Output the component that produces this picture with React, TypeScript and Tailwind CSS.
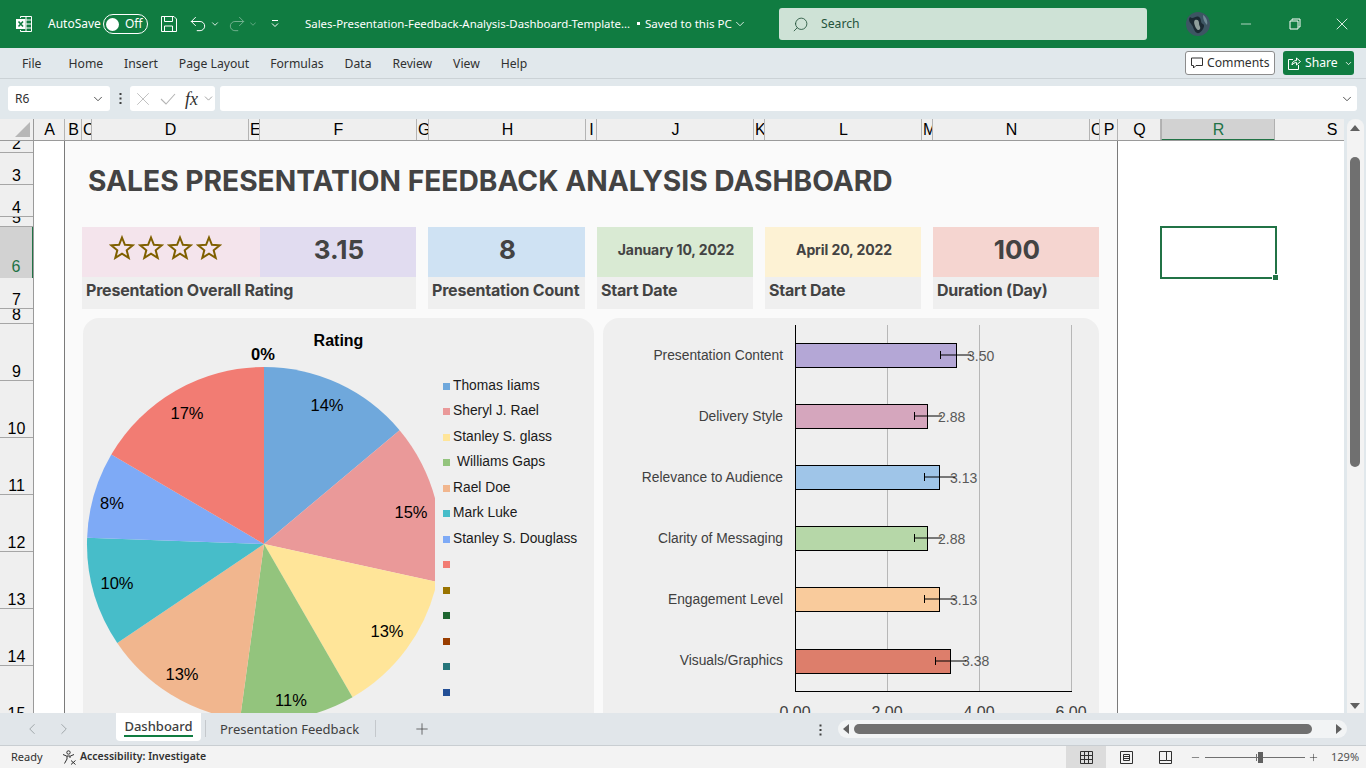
import { ChevronDown, ChevronLeft, ChevronRight, Minus, Plus, Redo2, Search, Undo2, X } from 'lucide-react';

const columns: [string, number][] = [
  ['A', 31], ['B', 17], ['C', 10], ['D', 157], ['E', 11], ['F', 157], ['G', 12], ['H', 157], ['I', 11], ['J', 157],
  ['K', 11], ['L', 157], ['M', 11], ['N', 157], ['O', 10], ['P', 18], ['Q', 43], ['R', 114], ['S', 114],
];

const rows: [string, number][] = [
  ['2', 12], ['3', 32], ['4', 32], ['5', 10], ['6', 51], ['7', 31], ['8', 15], ['9', 57], ['10', 57], ['11', 57],
  ['12', 57], ['13', 57], ['14', 57], ['15', 57],
];

const ribbon = ['Home', 'Insert', 'Page Layout', 'Formulas', 'Data', 'Review', 'View', 'Help'];

const slices = [
  { from: 0, to: 50, color: '#6fa8dc', label: '14%', x: 327, y: 405 },
  { from: 50, to: 102.4, color: '#ea9999', label: '15%', x: 411, y: 512 },
  { from: 102.4, to: 150, color: '#ffe599', label: '13%', x: 387, y: 631 },
  { from: 150, to: 187.8, color: '#93c47d', label: '11%', x: 291, y: 700 },
  { from: 187.8, to: 236, color: '#f1b68e', label: '13%', x: 182, y: 674 },
  { from: 236, to: 272, color: '#47bdc9', label: '10%', x: 117, y: 583 },
  { from: 272, to: 300.4, color: '#7eaaf6', label: '8%', x: 112, y: 503 },
  { from: 300.4, to: 360, color: '#f27c73', label: '17%', x: 187, y: 413 },
];

const legend = [
  { color: '#6fa8dc', name: 'Thomas Iiams' },
  { color: '#ea9999', name: 'Sheryl J. Rael' },
  { color: '#ffe599', name: 'Stanley S. glass' },
  { color: '#93c47d', name: 'Williams Gaps', indent: true },
  { color: '#f1b68e', name: 'Rael Doe' },
  { color: '#47bdc9', name: 'Mark Luke' },
  { color: '#7eaaf6', name: 'Stanley S. Douglass' },
  { color: '#f27c73', name: '' },
  { color: '#997300', name: '' },
  { color: '#1e6630', name: '' },
  { color: '#993d00', name: '' },
  { color: '#26757a', name: '' },
  { color: '#234f96', name: '' },
];

const bars = [
  { name: 'Presentation Content', top: 343.5, end: 956.5, color: '#b4a7d6', low: 940.5, high: 971, value: '3.50', vx: 967 },
  { name: 'Delivery Style', top: 404.5, end: 927.5, color: '#d5a6bd', low: 914.5, high: 942, value: '2.88', vx: 938 },
  { name: 'Relevance to Audience', top: 465.5, end: 939.5, color: '#9fc5e8', low: 924.5, high: 955, value: '3.13', vx: 950 },
  { name: 'Clarity of Messaging', top: 526.5, end: 927.5, color: '#b6d7a8', low: 914.5, high: 942, value: '2.88', vx: 938 },
  { name: 'Engagement Level', top: 587.5, end: 939.5, color: '#f9cb9c', low: 924.5, high: 955, value: '3.13', vx: 950 },
  { name: 'Visuals/Graphics', top: 649.5, end: 950.5, color: '#dd7e6b', low: 935.5, high: 966, value: '3.38', vx: 962 },
];

const slicePath = (from: number, to: number) => {
  const cx = 264;
  const cy = 544;
  const r = 177;
  const a = (from * Math.PI) / 180;
  const b = (to * Math.PI) / 180;
  return `M${cx} ${cy}L${cx + r * Math.sin(a)} ${cy - r * Math.cos(a)}A${r} ${r} 0 ${to - from > 180 ? 1 : 0} 1 ${cx + r * Math.sin(b)} ${cy - r * Math.cos(b)}Z`;
};

const TitleBar = () => (
  <div className="flex h-12 shrink-0 items-center bg-[#107c41] text-white">
    <svg className="ml-4 shrink-0" width="16" height="16" viewBox="0 0 16 16" fill="none">
      <path d="M4.5 2V.5h11v15h-11V14M10 .5v15M10 4h5.5M10 8h5.5M10 12h5.5" stroke="#fff" />
      <rect x="0" y="3" width="9.5" height="10" fill="#fff" />
      <path d="M2.5 5.5l4.5 5M7 5.5l-4.5 5" stroke="#107c41" strokeWidth="1.6" />
    </svg>
    <span className="ml-4 w-[48px] text-[12px]">AutoSave</span>
    <div className="ml-[7px] flex h-5 w-[45px] items-center rounded-full border border-white pl-[2px]">
      <span className="h-[13px] w-[13px] rounded-full bg-white" />
      <span className="ml-[6px] text-[12px]">Off</span>
    </div>
    <svg className="ml-[13px] shrink-0" width="16" height="16" viewBox="0 0 16 16" fill="none" stroke="#fff">
      <path d="M.5.5h12.5l2.5 2.5v12.5H.5zM3.5.5v5h8v-5M3.5 15.5v-5.5h8v5.500" />
    </svg>
    <Undo2 className="ml-[11px]" size={20} strokeWidth={1.2} />
    <ChevronDown className="ml-[2px]" size={10} strokeWidth={2} />
    <Redo2 className="ml-[7px] opacity-40" size={20} strokeWidth={1.2} />
    <ChevronDown className="ml-[1px] opacity-40" size={10} strokeWidth={2} />
    <svg className="ml-[12px] shrink-0" width="10" height="10" viewBox="0 0 10 10" fill="none" stroke="#fff">
      <path d="M2 1.500h6M2 4.500l3 3 3-3" />
    </svg>
    <div className="ml-[25px] flex w-[427px] shrink-0 items-center whitespace-nowrap text-[11.600px]">
      <span className="w-[327px] shrink-0 text-[11.400px]">Sales-Presentation-Feedback-Analysis-Dashboard-Template...</span>
      <span className="ml-[5px] h-[3px] w-[3px] shrink-0 bg-white" />
      <span className="ml-[5px]">Saved to this PC</span>
    </div>
    <ChevronDown className="ml-[1px]" size={14} strokeWidth={1.4} />
    <div className="ml-[32px] flex h-8 w-[368px] shrink-0 items-center rounded-[3px] bg-[#cee2d6] text-[#24533b]">
      <Search className="ml-[13px] -scale-x-100" size={17} strokeWidth={1.2} />
      <span className="ml-3 text-[12.200px]">Search</span>
    </div>
    <svg className="ml-[39px] shrink-0" width="24" height="24" viewBox="0 0 24 24">
      <circle cx="12" cy="12" r="12" fill="#3d5563" />
      <path d="M4 5c3 3 6-2 9 0s1 6 4 7-1 8-4 9-5-3-6-6-6-6-3-10z" fill="#1b2a33" />
      <path d="M9 8c2-1 4 0 4 3s2 4 1 6-3 1-4-1-3-6-1-8z" fill="#8f9f9c" />
      <path d="M17 3c3 2 5 6 4 10-2-2-4-5-4-10z" fill="#6f8a96" />
    </svg>
    <Minus className="ml-[28px]" size={16} strokeWidth={1} />
    <svg className="ml-[35px] shrink-0" width="12" height="12" viewBox="0 0 12 12" fill="none" stroke="#fff">
      <path d="M3 2.500V1h8v8H9.500M1 3h8v8H1z" />
    </svg>
    <X className="ml-[31px]" size={20} strokeWidth={1} />
  </div>
);

const RibbonTabs = () => (
  <div className="flex h-[31px] shrink-0 items-center border-b border-[#cbd2d6] bg-[#e1e8ec] text-[12.200px] text-[#303030]">
    <span className="ml-[22px] mr-[27px] mt-[2px]">File</span>
    <div className="mt-[2px] flex gap-[20.900px]">
      {ribbon.map((tab) => (
        <span key={tab}>{tab}</span>
      ))}
    </div>
    <div className="ml-auto flex h-6 w-[90px] items-center rounded-[3px] border border-[#8c8c8c] bg-white pl-[5px]">
      <svg width="12" height="12" viewBox="0 0 12 12" fill="none" stroke="#303030">
        <path d="M.5 1h11v7.500H5l-2.500 2.500V8.500h-2z" />
      </svg>
      <span className="ml-[4px]">Comments</span>
    </div>
    <div className="ml-2 mr-3 flex h-6 w-[71px] items-center rounded-[3px] bg-[#107c41] pl-[5px] text-white">
      <svg width="13" height="13" viewBox="0 0 13 13" fill="none" stroke="#fff">
        <path d="M5 2.500H.5v10h10V8M4 8c0-3 2-4.500 4.500-4.500V1L12.500 4.500 8.500 8V5.500C6.500 5.500 5 6.500 4 8z" />
      </svg>
      <span className="ml-[4px]">Share</span>
      <ChevronDown className="ml-[6px]" size={9} strokeWidth={2.2} />
    </div>
  </div>
);

const FormulaBar = () => (
  <div className="flex h-10 shrink-0 items-center bg-[#e1e8ec] pb-px text-[12px] text-[#303030]">
    <div className="ml-2 flex h-[25px] w-[102px] items-center justify-between rounded-[3px] bg-white pl-[7px] pr-[5px]">
      <span>R6</span>
      <ChevronDown size={14} strokeWidth={1.4} />
    </div>
    <svg className="ml-[9px] shrink-0" width="3" height="13" viewBox="0 0 3 13" fill="#404040">
      <rect x="0.500" y="1" width="2" height="2" />
      <rect x="0.500" y="5.500" width="2" height="2" />
      <rect x="0.500" y="10" width="2" height="2" />
    </svg>
    <div className="ml-[8px] flex h-[25px] w-[85px] items-center rounded-[3px] bg-white">
      <X className="ml-[2px] text-[#b4b4b4]" size={22} strokeWidth={0.9} />
      <svg className="ml-[6px] shrink-0" width="16" height="14" viewBox="0 0 16 14" fill="none" stroke="#b4b4b4" strokeWidth="1.100">
        <path d="M1 7l5 5 9-10" />
      </svg>
      <span className="ml-[9px] w-[14px] font-['Liberation_Serif',serif] text-[18px] italic leading-none text-[#303030]">fx</span>
      <ChevronDown className="ml-[3px] text-[#808080]" size={13} strokeWidth={1.3} />
    </div>
    <div className="ml-[5px] flex h-[25px] w-[1137px] items-center justify-end rounded-[3px] bg-white pr-[3px]">
      <ChevronDown size={14} strokeWidth={1.4} />
    </div>
  </div>
);

const SheetHeader = () => (
  <div className="flex h-[22px] shrink-0 overflow-hidden border-b border-[#9a9a9a] bg-[#efefef] font-['Liberation_Sans',Arial,sans-serif] text-[16px] text-black">
    <div className="flex w-[34px] shrink-0 items-end justify-end border-r border-[#9a9a9a] pb-[3px] pr-[3px]">
      <svg width="15" height="15" viewBox="0 0 15 15" fill="#b7b7b7">
        <path d="M15 0v15H0z" />
      </svg>
    </div>
    {columns.map(([name, width]) =>
      name === 'R' ? (
        <div key={name} className="h-[22px] shrink-0 border-x border-b-2 border-[#b0b0b0] border-b-[#217346] bg-[#d2d2d2] pl-px text-center leading-[21px] text-[#217346]" style={{ width }}>
          {name}
        </div>
      ) : (
        <div key={name} className="shrink-0 overflow-hidden whitespace-nowrap border-r border-[#b4b4b4] pl-px text-center leading-[21px]" style={{ width }}>
          {name}
        </div>
      ),
    )}
  </div>
);

const RowHeader = () => (
  <div className="w-[34px] shrink-0 overflow-hidden border-r border-[#9a9a9a] bg-[#efefef] font-['Liberation_Sans',Arial,sans-serif] text-[16px] text-black">
    {rows.map(([name, height]) =>
      name === '6' ? (
        <div key={name} className="-mr-px flex items-end justify-center overflow-hidden border-r-2 border-r-[#217346] bg-[#d2d2d2] pb-[2px] leading-[18px] text-[#217346]" style={{ height }}>
          {name}
        </div>
      ) : (
        <div key={name} className="flex items-end justify-center overflow-hidden border-b border-[#a6a6a6] leading-[16px]" style={{ height }}>
          {name}
        </div>
      ),
    )}
  </div>
);

const Star = () => (
  <svg width="26" height="25" viewBox="0 0 26 25" fill="none" stroke="#7f6000" strokeWidth="2">
    <path d="M13 2.500l2.900 7.300 7.800.5-6 5 2 7.600-6.700-4.200-6.700 4.200 2-7.600-6-5 7.800-.5z" />
  </svg>
);

const KpiRow = () => {
  const labelCls = 'flex h-8 items-center whitespace-nowrap bg-[#efefef] pb-[7px] pl-1 text-[16px] font-bold tracking-[-0.2px] text-[#434343]';
  const bigCls = 'flex h-[50px] items-center justify-center pb-[6px] pl-[2px] text-[26px] font-bold text-[#434343]';
  const dateCls = 'flex h-[50px] items-center justify-center pb-[5px] pl-[2px] text-[14px] font-bold tracking-[-0.1px] text-[#434343]';
  return (
    <div className="flex gap-3">
      <div className="w-[334px]">
        <div className="flex h-[50px]">
          <div className="flex w-[178px] items-center gap-[3px] bg-[#f4e4ec] pb-[10px] pl-[27px]">
            <Star />
            <Star />
            <Star />
            <Star />
          </div>
          <div className={`${bigCls} w-[156px] bg-[#e1dcf0]`}>3.15</div>
        </div>
        <div className={labelCls}>Presentation Overall Rating</div>
      </div>
      <div className="w-[157px]">
        <div className={`${bigCls} bg-[#cfe2f3]`}>8</div>
        <div className={labelCls}>Presentation Count</div>
      </div>
      <div className="w-[156px]">
        <div className={`${dateCls} bg-[#d9ead3]`}>January 10, 2022</div>
        <div className={labelCls}>Start Date</div>
      </div>
      <div className="w-[156px]">
        <div className={`${dateCls} bg-[#fdf2d4]`}>April 20, 2022</div>
        <div className={labelCls}>Start Date</div>
      </div>
      <div className="w-[166px]">
        <div className={`${bigCls} bg-[#f5d5d0]`}>100</div>
        <div className={labelCls}>Duration (Day)</div>
      </div>
    </div>
  );
};

const PieCard = () => (
  <div className="h-[420px] w-[511px] shrink-0 rounded-2xl bg-[#efefef] font-['Liberation_Sans',Arial,sans-serif]">
    <div className="h-[27px] pt-[13px] text-center text-[16px] font-bold leading-5 text-black">Rating</div>
    <div className="flex">
      <svg className="ml-[2px] shrink-0" width="350" height="380" viewBox="85 345 350 380">
        {slices.map((s) => (
          <path key={s.color} d={slicePath(s.from, s.to)} fill={s.color} />
        ))}
        <text x="263" y="360" textAnchor="middle" fontSize="16.500" fontWeight="700" fill="#000">0%</text>
        {slices.map((s) => (
          <text key={s.color} x={s.x} y={s.y + 6} textAnchor="middle" fontSize="16.500" fill="#000">{s.label}</text>
        ))}
      </svg>
      <div className="ml-[8px] mt-[28.500px] flex flex-col text-[13.800px] text-[#1a1a1a]">
        {legend.map((item) => (
          <div key={item.color} className="flex h-[25.500px] items-center gap-[3px] whitespace-nowrap">
            <span className="h-[7px] w-[7px] shrink-0" style={{ backgroundColor: item.color }} />
            <span className={item.indent ? 'pl-1' : ''}>{item.name}</span>
          </div>
        ))}
      </div>
    </div>
  </div>
);

const BarCard = () => (
  <div className="h-[420px] w-[496px] shrink-0 rounded-2xl bg-[#efefef] font-['Liberation_Sans',Arial,sans-serif]">
    <svg width="496" height="420" viewBox="603 318 496 420">
      {[887.5, 979.5, 1071.5].map((x) => (
        <line key={x} x1={x} x2={x} y1="325" y2="691" stroke="#b7b7b7" />
      ))}
      {bars.map((b, i) => (
        <g key={b.name}>
          <text x="783" y={359.5 + i * 61} textAnchor="end" fontSize="13.800" fill="#404040">{b.name}</text>
          <rect x="795.500" y={b.top} width={b.end - 795.5} height="24" fill={b.color} stroke="#000" />
          <text x={b.vx} y={360.5 + i * 61} fontSize="14" fill="#595959">{b.value}</text>
          <line x1={b.low} x2={b.high} y1={b.top + 11.5} y2={b.top + 11.5} stroke="#000" />
          <line x1={b.low} x2={b.low} y1={b.top + 7.5} y2={b.top + 15.5} stroke="#000" />
        </g>
      ))}
      <line x1="795.500" x2="795.500" y1="325" y2="691.500" stroke="#000" />
      <line x1="795" x2="1072" y1="691.500" y2="691.500" stroke="#000" />
      {[795, 887, 979, 1071].map((x, i) => (
        <text key={x} x={x} y="718" textAnchor="middle" fontSize="16" fill="#404040">{`${i * 2}.00`}</text>
      ))}
    </svg>
  </div>
);

const Dashboard = () => (
  <div className="w-[1053px] shrink-0 overflow-hidden border-r border-[#7a7a7a] bg-[#fafafa] pl-[17px] font-['Inter',sans-serif]">
    <div className="flex h-[86px] items-start whitespace-nowrap pl-[6px] pt-[23px] text-[28.200px] font-bold leading-[34px] text-[#434343]">
      SALES PRESENTATION FEEDBACK ANALYSIS DASHBOARD
    </div>
    <KpiRow />
    <div className="ml-px mt-[9px] flex gap-[9px]">
      <PieCard />
      <BarCard />
    </div>
  </div>
);

const VerticalScroll = () => (
  <div className="flex w-[22px] shrink-0 justify-center bg-[#e1e8ec]">
    <div className="flex h-full w-[17px] flex-col items-center rounded-t-lg bg-[#f3f3f3] pt-[6px]">
      <span className="h-0 w-0 border-x-[5px] border-b-[6px] border-x-transparent border-b-[#606060]" />
      <span className="mt-[26px] h-[310px] w-[10px] shrink-0 rounded-full bg-[#707070]" />
      <span className="mb-[4px] mt-auto h-0 w-0 border-x-[5px] border-t-[6px] border-x-transparent border-t-[#606060]" />
    </div>
  </div>
);

const SheetTabs = () => (
  <div className="flex h-[33px] shrink-0 items-start border-b border-[#c9ced2] bg-[#e1e6ea] text-[13px] text-[#404040]">
    <ChevronLeft className="ml-[23px] mt-[7px] text-[#9aa0a4]" size={18} strokeWidth={1.2} />
    <ChevronRight className="ml-[14px] mt-[7px] text-[#9aa0a4]" size={18} strokeWidth={1.2} />
    <div className="ml-[43px] flex h-[28px] w-[85px] flex-col items-center rounded-b-[4px] bg-white pt-[5px] font-medium">
      <span className="leading-[17px]">Dashboard</span>
      <span className="h-[2px] w-[69px] bg-[#107c41]" />
    </div>
    <span className="ml-[4px] mt-[7px] h-[17px] w-px bg-[#c4c8cc]" />
    <span className="ml-[14px] mt-[6px] w-[141px] whitespace-nowrap leading-[20px]">Presentation Feedback</span>
    <span className="ml-[14px] mt-[7px] h-[17px] w-px bg-[#c4c8cc]" />
    <Plus className="ml-[37px] mt-[7px]" size={18} strokeWidth={1} />
    <svg className="ml-[388px] mt-[11px] shrink-0" width="3" height="12" viewBox="0 0 3 12" fill="#404040">
      <rect x="0.500" y="0.500" width="2" height="2" />
      <rect x="0.500" y="5" width="2" height="2" />
      <rect x="0.500" y="9.500" width="2" height="2" />
    </svg>
    <div className="ml-[16px] mt-[7px] flex h-[18px] w-[509px] items-center rounded-full bg-[#f2f4f5] px-[5px]">
      <span className="h-0 w-0 border-y-[5px] border-r-[6px] border-y-transparent border-r-[#606060]" />
      <span className="ml-[5px] h-[10px] w-[458px] rounded-full bg-[#707070]" />
      <span className="ml-auto h-0 w-0 border-y-[5px] border-l-[6px] border-y-transparent border-l-[#606060]" />
    </div>
  </div>
);

const StatusBar = () => (
  <div className="flex h-[22px] shrink-0 items-center bg-[#f3f3f3] text-[11px] text-[#303030]">
    <div className="flex w-[1066px] shrink-0 items-center">
      <span className="ml-[11px] w-[31px]">Ready</span>
      <svg className="ml-[20px] shrink-0" width="15" height="15" viewBox="0 0 15 15" fill="none" stroke="#303030">
        <circle cx="6.500" cy="2.500" r="1.700" />
        <path d="M1 4.500l3.500 1.500h4L12 4.500M5 6v3l-2.500 4.500M8 6v2M9 10.500l4.500 4M13.500 10.500l-4.500 4" />
      </svg>
      <span className="ml-[3px] text-[10.500px] font-semibold">Accessibility: Investigate</span>
    </div>
    <div className="flex h-full w-[40px] items-center justify-center bg-[#dcdcdc]">
      <svg width="13" height="13" viewBox="0 0 13 13" fill="none" stroke="#303030">
        <path d="M.5.5h12v12H.5zM.5 4.500h12M.5 8.500h12M4.500.5v12M8.500.5v12" />
      </svg>
    </div>
    <svg className="ml-[14px] shrink-0" width="13" height="13" viewBox="0 0 13 13" fill="none" stroke="#303030">
      <path d="M.5.5h12v12H.5zM3.500 3.500h6v6h-6zM3.500 5.500h6M3.500 7.500h6" />
    </svg>
    <svg className="ml-[26px] shrink-0" width="13" height="13" viewBox="0 0 13 13" fill="none" stroke="#303030">
      <path d="M.5.5h12v12H.5zM.5 9.500h7V.5M7.500 9.500h5" />
    </svg>
    <Minus className="ml-[18px]" size={11} strokeWidth={1.2} />
    <div className="relative ml-[4px] h-px w-[100px] bg-[#707070]">
      <span className="absolute left-[51px] top-[-3px] h-[7px] w-px bg-[#707070]" />
      <span className="absolute left-[53px] top-[-5px] h-[11px] w-[5px] bg-[#606060]" />
    </div>
    <Plus className="ml-[3px]" size={11} strokeWidth={1.2} />
    <span className="ml-[12px] text-[#505050]">129%</span>
  </div>
);

export default function App() {
  return (
    <div className="flex h-[768px] w-[1366px] flex-col overflow-hidden font-['Noto_Sans','Open_Sans',sans-serif]">
      <TitleBar />
      <RibbonTabs />
      <FormulaBar />
      <div className="flex h-[594px] shrink-0">
        <div className="flex w-[1344px] shrink-0 flex-col bg-white">
          <SheetHeader />
          <div className="flex min-h-0 flex-1 overflow-hidden">
            <RowHeader />
            <div className="w-[31px] shrink-0 border-r border-[#7a7a7a] bg-white" />
            <Dashboard />
            <div className="flex-1">
              <div className="relative ml-[42px] mt-[85px] h-[53px] w-[117px] border-2 border-[#217346]">
                <span className="absolute -bottom-[4px] -right-[4px] h-[7px] w-[7px] border border-white bg-[#217346]" />
              </div>
            </div>
          </div>
        </div>
        <VerticalScroll />
      </div>
      <SheetTabs />
      <StatusBar />
    </div>
  );
}
